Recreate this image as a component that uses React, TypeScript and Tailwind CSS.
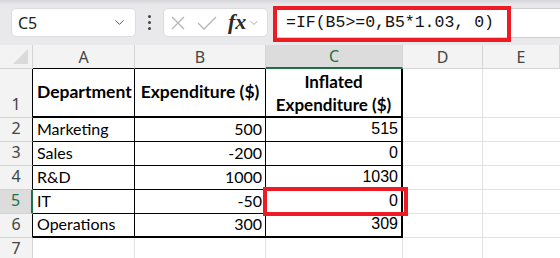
import { ChevronDown } from 'lucide-react'

const cols = [
  { key: 'A', w: 'w-[102px]' },
  { key: 'B', w: 'w-[131px]' },
  { key: 'C', w: 'w-[137px]' },
  { key: 'D', w: 'w-[80px]' },
  { key: 'E', w: 'flex-1' },
]

const rows = [
  { n: 2, dept: 'Marketing', exp: '500', inf: '515' },
  { n: 3, dept: 'Sales', exp: '-200', inf: '0' },
  { n: 4, dept: 'R&D', exp: '1000', inf: '1030' },
  { n: 5, dept: 'IT', exp: '-50', inf: '0' },
  { n: 6, dept: 'Operations', exp: '300', inf: '309' },
]

const cellFont = { fontFamily: 'Lato, "Open Sans", sans-serif' }
const uiFont = { fontFamily: '"Noto Sans", "Open Sans", sans-serif' }

function Toolbar() {
  return (
    <div className="relative h-[45px] bg-[#e9e9ec]">
      <div className="absolute left-0 right-0 top-0 h-[5px] bg-gradient-to-b from-[#d6d6da] to-[#e9e9ec]" />
      <div className="flex items-start pt-[8px]">
        <div className="ml-[11px] w-[125px] h-[29px] bg-white rounded-[5px] border border-[#dcdcdf] flex items-center pl-[6px] pr-[8px]">
          <span className="text-[16px] text-[#222] flex-1" style={uiFont}>C5</span>
          <ChevronDown size={15} strokeWidth={1.6} className="text-[#555]" />
        </div>
        <div className="w-[27px] h-[29px] flex flex-col items-center justify-center gap-[3px]">
          <div className="w-[3px] h-[3px] rounded-full bg-[#444]" />
          <div className="w-[3px] h-[3px] rounded-full bg-[#444]" />
          <div className="w-[3px] h-[3px] rounded-full bg-[#444]" />
        </div>
        <div className="w-[105px] h-[29px] bg-white rounded-[5px] border border-[#dcdcdf] flex items-center pl-[7px]">
          <svg width="14" height="14" viewBox="0 0 14 14" className="mr-[12px]">
            <path d="M1 1 L13 13 M13 1 L1 13" stroke="#b5b5b5" strokeWidth="1.3" fill="none" />
          </svg>
          <svg width="20" height="14" viewBox="0 0 20 14" className="mr-[11px]">
            <path d="M1 7 L7 13 L19 1" stroke="#b5b5b5" strokeWidth="1.3" fill="none" />
          </svg>
          <span
            className="text-[22px] italic font-semibold text-[#2a2a2a] leading-none mr-[2px] -mt-[2px]"
            style={{ fontFamily: '"Liberation Serif", "DejaVu Serif", serif' }}
          >
            fx
          </span>
          <ChevronDown size={12} strokeWidth={1.5} className="text-[#888]" />
        </div>
        <div className="ml-[5px] flex-1 h-[30px] bg-white border-y border-[#cfcfd3] flex items-center pl-[13px]">
          <span className="text-[16.5px] text-[#111]" style={{ fontFamily: '"Liberation Mono", monospace' }}>
            =IF(B5&gt;=0,B5*1.03, 0)
          </span>
        </div>
      </div>
      {/* annotation */}
      <div className="absolute left-[273px] top-[6px] w-[238px] h-[36px] border-[4px] border-[#ed1c24]" />
    </div>
  )
}

function HeaderRow() {
  return (
    <div className="flex h-[24px] bg-[#f3f3f3]" style={uiFont}>
      <div className="w-[33px] relative border-r border-[#d4d4d4] border-b border-b-[#d4d4d4]">
        <div className="absolute right-[4px] bottom-[4px] w-0 h-0 border-l-[15px] border-l-transparent border-b-[15px] border-b-[#dadada]" />
      </div>
      {cols.map((c) => {
        const sel = c.key === 'C'
        const bottom = sel
          ? 'border-b-2 border-b-[#1e7145]'
          : c.key === 'A' || c.key === 'B'
            ? 'border-b border-b-black'
            : 'border-b border-b-[#d4d4d4]'
        return (
          <div
            key={c.key}
            className={`${c.w} ${bottom} border-r border-r-[#d4d4d4] flex items-center justify-center text-[16px] ${
              sel ? 'bg-[#dcdcdc] text-[#1e7145]' : 'text-[#444]'
            }`}
          >
            {c.key}
          </div>
        )
      })}
    </div>
  )
}

function RowHead({ n, h, sel, black }: { n: number; h: string; sel?: boolean; black?: boolean }) {
  return (
    <div
      className={`w-[33px] ${h} flex items-end justify-center pb-[1px] text-[16px] border-b border-b-[#d4d4d4] ${
        sel
          ? 'bg-[#dcdcdc] text-[#1e7145] border-r-2 border-r-[#1e7145]'
          : black
            ? 'bg-[#f3f3f3] text-[#444] border-r border-r-black'
            : 'bg-[#f3f3f3] text-[#444] border-r border-r-[#d4d4d4]'
      }`}
      style={uiFont}
    >
      {n}
    </div>
  )
}

export default function App() {
  return (
    <div className="w-[560px] h-[258px] overflow-hidden bg-white">
      <Toolbar />
      <div className="relative">
        <HeaderRow />

        {/* row 1 */}
        <div className="flex">
          <RowHead n={1} h="h-[49px]" black />
          <div className="w-[102px] h-[49px] border-r border-black border-b-2 border-b-black flex items-center pl-[4px] text-[17.5px] font-bold text-black" style={cellFont}>
            Department
          </div>
          <div className="w-[131px] h-[49px] border-r border-black border-b-2 border-b-black flex items-center justify-center text-[17.5px] font-bold text-black" style={cellFont}>
            Expenditure ($)
          </div>
          <div className="w-[137px] h-[49px] border-r-2 border-black border-b-2 border-b-black flex flex-col items-center justify-center text-[17px] font-bold text-black leading-[23px] pt-[1px]" style={cellFont}>
            <span>Inflated</span>
            <span>Expenditure ($)</span>
          </div>
          <div className="w-[80px] h-[49px] border-r border-b border-[#e1e1e1]" />
          <div className="flex-1 h-[49px] border-b border-[#e1e1e1]" />
        </div>

        {rows.map((r) => {
          const last = r.n === 6
          const bb = last ? 'border-b-2 border-b-black' : 'border-b border-b-black'
          return (
            <div key={r.n} className="flex">
              <RowHead n={r.n} h="h-[24px]" sel={r.n === 5} black />
              <div className={`w-[102px] h-[24px] border-r border-r-black ${bb} flex items-end pl-[4px] text-[16px] text-black`} style={cellFont}>
                {r.dept}
              </div>
              <div className={`w-[131px] h-[24px] border-r border-r-black ${bb} flex items-end justify-end pr-[3px] text-[16px] text-black`} style={cellFont}>
                {r.exp}
              </div>
              <div className={`w-[137px] h-[24px] border-r-2 border-r-black ${bb} flex items-end justify-end pr-[3px] text-[16px] text-black`} style={{ fontFamily: '"Liberation Sans", Arial, sans-serif' }}>
                {r.inf}
              </div>
              <div className="w-[80px] h-[24px] border-r border-b border-[#e1e1e1]" />
              <div className="flex-1 h-[24px] border-b border-[#e1e1e1]" />
            </div>
          )
        })}

        {/* row 7 */}
        <div className="flex">
          <RowHead n={7} h="h-[24px]" />
          <div className="w-[102px] h-[24px] border-r border-b border-[#e1e1e1]" />
          <div className="w-[131px] h-[24px] border-r border-b border-[#e1e1e1]" />
          <div className="w-[137px] h-[24px] border-r border-b border-[#e1e1e1]" />
          <div className="w-[80px] h-[24px] border-r border-b border-[#e1e1e1]" />
          <div className="flex-1 h-[24px] border-b border-[#e1e1e1]" />
        </div>

        {/* annotation around C5 */}
        <div className="absolute left-[263px] top-[142px] w-[145px] h-[29px] border-[4px] border-[#ed1c24]" />
      </div>
    </div>
  )
}
